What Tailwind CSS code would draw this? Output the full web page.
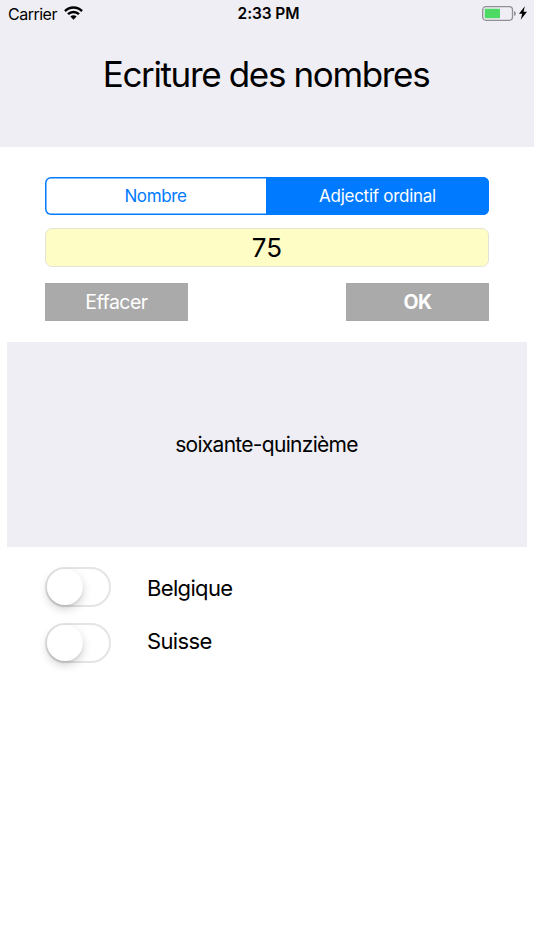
<!DOCTYPE html>
<html lang="fr">
<head>
    <meta charset="UTF-8">
    <meta name="viewport" content="width=device-width, initial-scale=1.0">
    <title>Ecriture des nombres</title>
    <script src="https://cdn.jsdelivr.net/npm/@tailwindcss/browser@4"></script>
</head>
<body class="h-[950px] overflow-hidden bg-white font-['Inter',sans-serif] text-black">
    <header class="h-[147px] bg-[#efeef4]">
        <!-- status bar -->
        <div class="grid h-7 grid-cols-3 items-center pl-2 pr-[7px]">
            <div class="flex items-center gap-[7px]">
                <span class="text-[16px] leading-7 tracking-[-0.5px]">Carrier</span>
                <svg class="h-[14px] w-[19px] -translate-y-px" viewBox="0 0 19 14">
                    <g fill="none" stroke="#000" stroke-width="2.5">
                        <path d="M1 5.1a12.1 12.1 0 0 1 17 0"/>
                        <path d="M4 8.2a7.8 7.8 0 0 1 11 0"/>
                    </g>
                    <path d="M6.4 10.6a4.4 4.4 0 0 1 6.2 0L9.5 13.7z"/>
                </svg>
            </div>
            <span class="pl-0.5 text-center text-[15.5px] font-semibold leading-7 tracking-[-0.1px]">2:33 PM</span>
            <div class="flex -translate-y-px items-center justify-end gap-[3px]">
                <svg class="h-[15px] w-[34px]" viewBox="0 0 34 15">
                    <rect x=".7" y=".7" width="29.8" height="13.6" rx="3.2" fill="none" stroke="#8f8f94" stroke-width="1.3"/>
                    <rect x="2.7" y="2.7" width="15.3" height="9.6" rx=".8" fill="#4cd964"/>
                    <path d="M32 5c2.4.7 2.4 4.3 0 5z" fill="#8f8f94"/>
                </svg>
                <svg class="h-[14px] w-[8px]" viewBox="0 0 8 14">
                    <path d="M5.8.3 0 7.8h3.2L1.7 13.7 8 5.8H4.6z"/>
                </svg>
            </div>
        </div>
        <h1 class="mt-[22px] pr-[2px] text-center text-[35px] leading-[48px] tracking-[-1.35px]">Ecriture des nombres</h1>
    </header>

    <main>
        <section class="flex flex-col px-[45px] pt-[30px]">
            <div class="flex h-[37.5px] rounded-[6px] text-[17px] shadow-[inset_0_0_0_1.5px_#007aff]">
                <button class="w-[221px] pt-px tracking-[-0.35px] text-[#007aff]">Nombre</button>
                <button class="flex-1 rounded-r-[6px] bg-[#007aff] pt-px tracking-[-0.27px] text-white">Adjectif ordinal</button>
            </div>
            <div class="mt-[13.5px] flex h-[39px] items-center justify-center rounded-[7px] border border-[#e4e4d4] bg-[#fffdc6] text-[26px]">75</div>
            <div class="mt-4 flex justify-between text-[19.5px] text-white">
                <button class="h-[38px] w-[143px] bg-[#aaaaaa] pt-0.5 tracking-[-0.5px]">Effacer</button>
                <button class="h-[38px] w-[143px] bg-[#aaaaaa] pt-0.5 font-bold tracking-[-0.6px]">OK</button>
            </div>
        </section>

        <section class="mx-[7px] mt-[21px] flex h-[205px] items-center justify-center bg-[#efeef4] pr-px text-[21px] tracking-[-0.7px]">soixante-quinzième</section>

        <section class="flex flex-col gap-4 px-[45px] pt-5 text-[22px] tracking-[-0.66px]">
            <div class="flex items-start gap-9">
                <span class="flex h-10 w-[66px] rounded-full border-2 border-[#e5e5e5]">
                    <span class="size-9 rounded-full bg-white shadow-[0_4px_10px_rgba(0,0,0,0.18),0_2px_2px_rgba(0,0,0,0.07)]"></span>
                </span>
                <span class="leading-[42px]">Belgique</span>
            </div>
            <div class="-mt-0.5 flex items-start gap-9">
                <span class="flex h-10 w-[66px] rounded-full border-2 border-[#e5e5e5]">
                    <span class="size-9 rounded-full bg-white shadow-[0_4px_10px_rgba(0,0,0,0.18),0_2px_2px_rgba(0,0,0,0.07)]"></span>
                </span>
                <span class="leading-[36px]">Suisse</span>
            </div>
        </section>
    </main>
</body>
</html>
